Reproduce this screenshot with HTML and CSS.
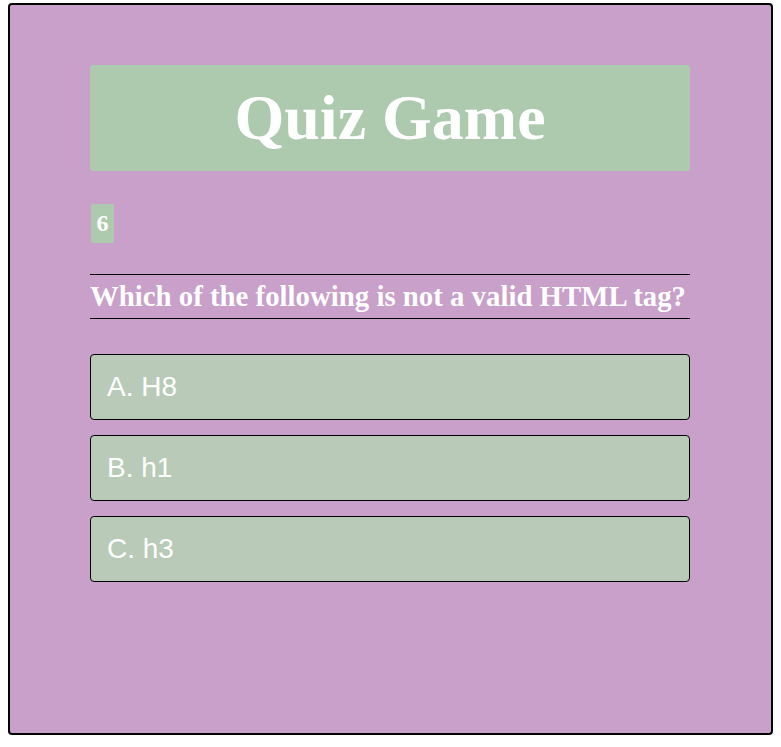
FILE: index.html
```html
<!DOCTYPE html>
<html>
<head>
<meta charset="utf-8">
<link rel="stylesheet" href="styles.css">
</head>
<body>
<div class="box">
  <div class="inner">
    <div class="header"><h1 class="title">Quiz Game</h1></div>
    <div class="badge-row"><span class="badge">6</span></div>
    <div class="question">Which of the following is not a valid HTML tag?</div>
    <div class="options">
      <div class="option">A. H8</div>
      <div class="option">B. h1</div>
      <div class="option">C. h3</div>
    </div>
  </div>
</div>
</body>
</html>
```
FILE: styles.css
```css
html, body { background: #ffffff; }
body {
  margin: 3px 8px 0 8px;
}
.box {
  height: 732px;
  box-sizing: border-box;
  border: 2px solid #000;
  border-radius: 4px;
  background: #c8a0c9;
}
.inner {
  width: 600px;
  margin-left: 80px;
  padding-top: 60px;
}
.header {
  background: #adcaae;
  border-radius: 3px;
  height: 106px;
  display: flex;
  align-items: center;
  justify-content: center;
}
.title {
  margin: 0;
  font-family: "Liberation Serif", serif;
  font-weight: bold;
  font-size: 64px;
  color: #fff;
  line-height: 1;
}
.badge-row {
  margin-top: 33px;
  height: 39px;
  display: flex;
}
.badge {
  margin-left: 1px;
  width: 23px;
  height: 39px;
  background: #adcaae;
  border-radius: 2px;
  color: #fff;
  font-family: "Liberation Serif", serif;
  font-weight: bold;
  font-size: 24px;
  display: flex;
  align-items: center;
  justify-content: center;
}
.question {
  margin-top: 31px;
  border-top: 1px solid #000;
  border-bottom: 1px solid #000;
  height: 43px;
  display: flex;
  align-items: center;
  color: #fff;
  font-family: "Liberation Serif", serif;
  font-weight: bold;
  font-size: 28.8px;
  white-space: nowrap;
}
.options {
  margin-top: 35px;
  display: flex;
  flex-direction: column;
  gap: 15px;
}
.option {
  box-sizing: border-box;
  height: 66px;
  border: 1px solid #000;
  border-radius: 4px;
  background: #b9cab9;
  color: #fff;
  font-family: "Liberation Sans", Arial, sans-serif;
  font-size: 28px;
  padding-left: 16px;
  display: flex;
  align-items: center;
}
```
